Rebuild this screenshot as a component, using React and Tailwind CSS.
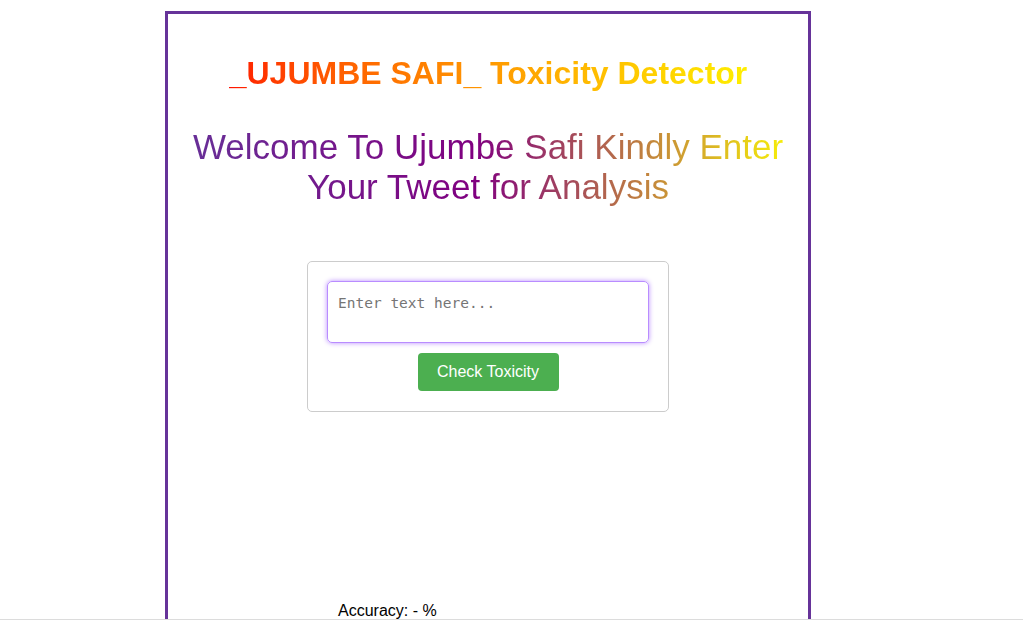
export default function App() {
  return (
    <div className="min-h-screen bg-white" style={{ fontFamily: '"Liberation Sans", Arial, sans-serif' }}>
      <div className="ml-[165px] mt-[11px] w-[646px] h-[700px] border-[3px] border-[#663399] flex flex-col items-center">
        <h1 className="mt-[41px] text-[32px] leading-[36px] font-bold">
          <span className="inline-block bg-gradient-to-r from-[#ff1000] to-[#ffee00] bg-clip-text text-transparent">
            _UJUMBE SAFI_ Toxicity Detector
          </span>
        </h1>
        <h2 className="mt-[36px] w-full px-[22px] text-center text-[35px] leading-[40px] bg-[linear-gradient(to_right,#663399,#800080_48%,#ffff00)] bg-clip-text text-transparent">
          Welcome To Ujumbe Safi Kindly Enter Your Tweet for Analysis
        </h2>
        <div className="mt-[54px] w-[362px] border border-[#cccccc] rounded-[5px] px-[19px] pt-[19px] pb-[20px] flex flex-col items-center gap-[10px]">
          <textarea
            placeholder="Enter text here..."
            className="w-[322px] h-[62px] rounded-[5px] border border-[#b98cff] shadow-[0_0_5px_#b98cff] px-[10px] pt-[11px] pb-[9px] text-[14.5px] outline-none resize-none placeholder:text-[#757575]"
            style={{ fontFamily: '"DejaVu Sans Mono", "Liberation Mono", monospace' }}
          />
          <button className="w-[141px] h-[38px] rounded-[4px] bg-[#4caf50] text-white text-[16px]">
            Check Toxicity
          </button>
        </div>
        <div className="self-start ml-[170px] mt-[187px] text-[16px] text-black">Accuracy: - %</div>
      </div>
      <div className="fixed left-0 right-0 bottom-0 h-px bg-[#dcdcdc]" />
    </div>
  );
}
